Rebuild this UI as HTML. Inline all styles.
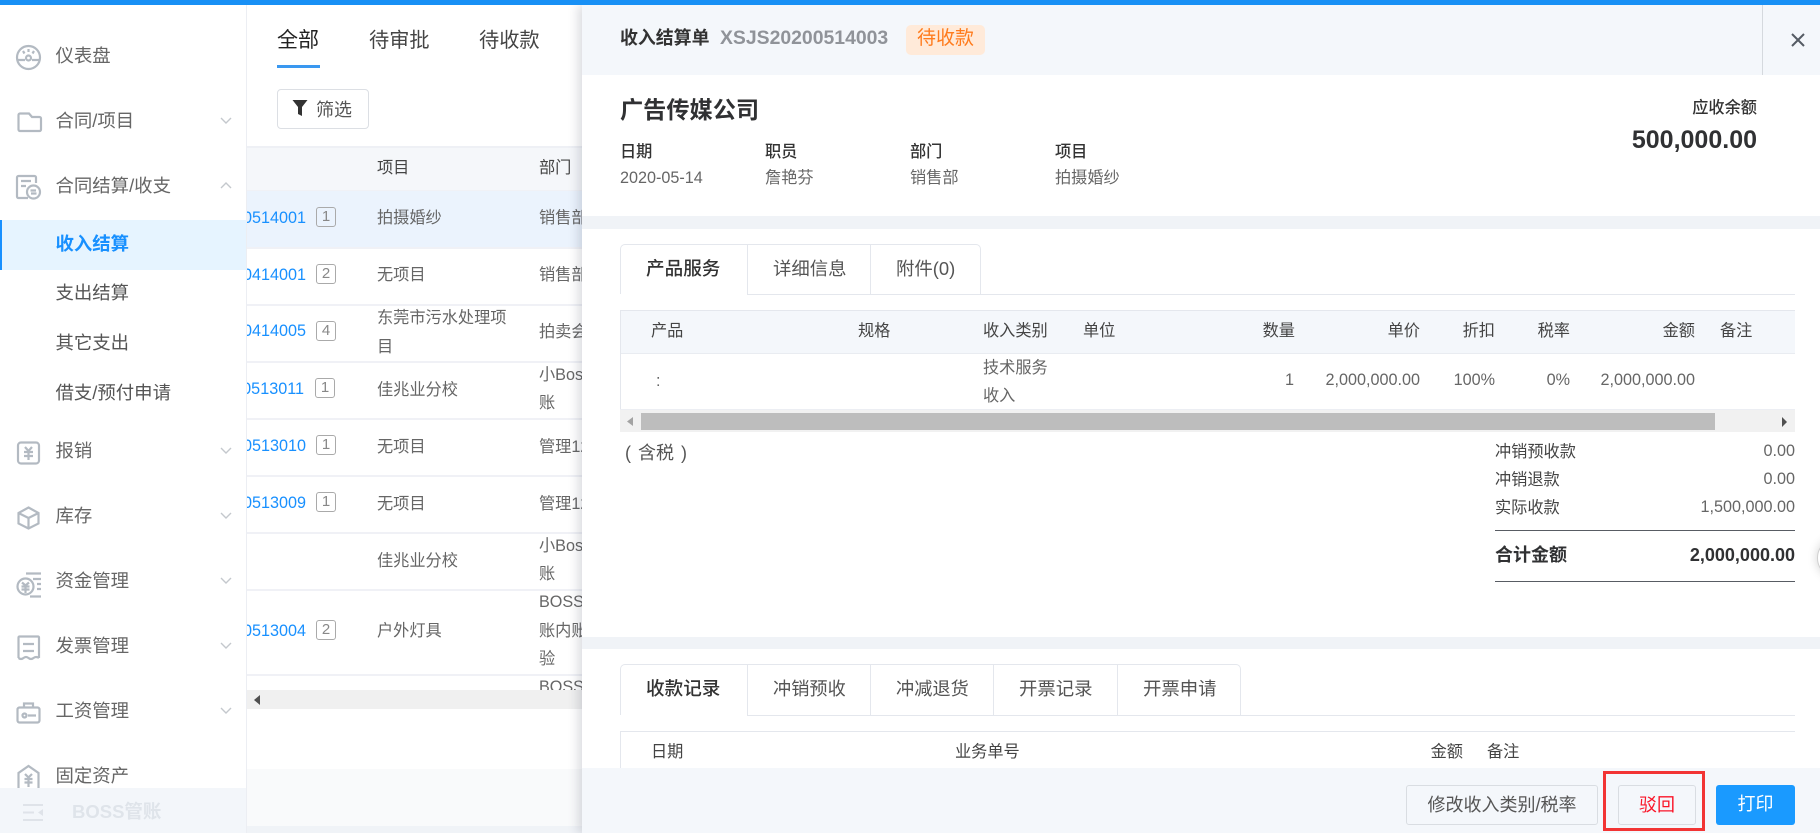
<!DOCTYPE html>
<html lang="zh"><head><meta charset="utf-8"><title>收入结算单</title>
<style>
html,body{margin:0;padding:0;background:#fff}
#r{position:relative;width:1820px;height:833px;overflow:hidden;background:#fff;font-family:"Liberation Sans","Noto Sans CJK SC",sans-serif;font-size:16.2px;color:#666}
#r div,#r span.t{position:absolute}
.t{position:absolute;white-space:nowrap;line-height:0}
.b{position:absolute}
.m{font-size:18.4px;color:#666}
.h{color:#444}
.n{color:#1890ff}
.g{width:18px;height:18px;border:1.5px solid #aaa;border-radius:3px;line-height:18px;text-align:center;color:#888;font-size:15px;box-sizing:content-box}
.l{height:2px;background:#f0f1f6;left:247px;width:335px}
.d{color:#333}
.dark{color:#333;font-weight:500}
svg{position:absolute;overflow:visible}
.ic{fill:none;stroke:#b3bac2;stroke-width:2.2}
.ch{fill:none;stroke:#c4c8cd;stroke-width:1.4}
</style></head><body><div id="r">

<!-- main list -->
<span class="t" style="left:277px;top:41px;font-size:21px;color:#222">全部</span>
<span class="t" style="left:369px;top:41px;font-size:20.2px;color:#444">待审批</span>
<span class="t" style="left:479px;top:41px;font-size:20.2px;color:#444">待收款</span>
<div style="left:277px;top:65px;width:43px;height:3px;background:#3a98f0"></div>
<div style="left:277px;top:89px;width:92px;height:40px;box-sizing:border-box;border:1px solid #dcdfe4;border-radius:4px"></div>
<svg style="left:292px;top:99px" width="16" height="18"><path d="M0.5 1H15.5L10 8V17L6 15V8Z" fill="#333"/></svg>
<span class="t" style="left:316px;top:110px;font-size:18px;color:#555">筛选</span>

<div style="left:247px;top:146px;width:335px;height:44px;background:#f5f7fa;border-top:2px solid #eef0f5;box-sizing:border-box"></div>
<div style="left:247px;top:190px;width:335px;height:57px;background:#ebf3fd"></div>
<div class="l" style="top:190px;height:1px"></div>
<div class="l" style="top:247px"></div><div class="l" style="top:304px"></div>
<div class="l" style="top:361px"></div><div class="l" style="top:418px"></div>
<div class="l" style="top:475px"></div><div class="l" style="top:532px"></div>
<div class="l" style="top:589px"></div><div class="l" style="top:674px"></div>

<span class="t h" style="left:377px;top:168px">项目</span>
<span class="t h" style="left:539px;top:168px">部门</span>

<span class="t n" style="right:1514px;top:218px">XSJS20200514001</span>
<div class="g" style="left:316px;top:207px">1</div>
<span class="t" style="left:377px;top:218px">拍摄婚纱</span><span class="t" style="left:539px;top:218px">销售部</span>

<span class="t n" style="right:1514px;top:275px">XSJS20200414001</span>
<div class="g" style="left:316px;top:264px">2</div>
<span class="t" style="left:377px;top:275px">无项目</span><span class="t" style="left:539px;top:275px">销售部</span>

<span class="t n" style="right:1514px;top:331px">XSJS20200414005</span>
<div class="g" style="left:316px;top:321px">4</div>
<span class="t" style="left:377px;top:318px">东莞市污水处理项</span><span class="t" style="left:377px;top:347px">目</span>
<span class="t" style="left:539px;top:332px">拍卖会</span>

<span class="t n" style="right:1516px;top:389px">XSJS20200513011</span>
<div class="g" style="left:315px;top:378px">1</div>
<span class="t" style="left:377px;top:390px">佳兆业分校</span>
<span class="t" style="left:539px;top:375px">小Boss</span><span class="t" style="left:539px;top:403px">账</span>

<span class="t n" style="right:1514px;top:446px">XSJS20200513010</span>
<div class="g" style="left:316px;top:435px">1</div>
<span class="t" style="left:377px;top:447px">无项目</span><span class="t" style="left:539px;top:447px">管理12</span>

<span class="t n" style="right:1514px;top:503px">XSJS20200513009</span>
<div class="g" style="left:316px;top:492px">1</div>
<span class="t" style="left:377px;top:504px">无项目</span><span class="t" style="left:539px;top:504px">管理12</span>

<span class="t" style="left:377px;top:561px">佳兆业分校</span>
<span class="t" style="left:539px;top:546px">小Boss</span><span class="t" style="left:539px;top:574px">账</span>

<span class="t n" style="right:1514px;top:631px">XSJS20200513004</span>
<div class="g" style="left:316px;top:620px">2</div>
<span class="t" style="left:377px;top:631px">户外灯具</span>
<span class="t" style="left:539px;top:602px">BOSS</span><span class="t" style="left:539px;top:631px">账内账</span><span class="t" style="left:539px;top:659px">验</span>
<span class="t" style="left:539px;top:687px">BOSS</span>

<div style="left:247px;top:690px;width:335px;height:143px;background:#fff"></div>
<div style="left:247px;top:690px;width:335px;height:19px;background:#f0f0f0"></div>
<svg style="left:254px;top:695px" width="8" height="10"><path d="M6 0V10L0 5Z" fill="#505050"/></svg>
<div style="left:247px;top:769px;width:335px;height:57px;background:#f9fafb"></div>
<div style="left:247px;top:826px;width:335px;height:7px;background:#f0f3f7"></div>

<!-- sidebar -->
<div style="left:0;top:5px;width:246px;height:828px;background:#fff;border-right:1px solid #eceef3"></div>
<div style="left:0;top:220px;width:246px;height:50px;background:#e6f4ff"></div>
<div style="left:0;top:220px;width:2px;height:50px;background:#1890ff"></div>

<span class="t m" style="left:55.5px;top:56px">仪表盘</span>
<span class="t m" style="left:55.5px;top:121px">合同/项目</span>
<span class="t m" style="left:55.5px;top:186px">合同结算/收支</span>
<span class="t m" style="left:55.5px;top:244px;color:#1890ff;font-weight:700">收入结算</span>
<span class="t m" style="left:55.5px;top:293px;color:#555">支出结算</span>
<span class="t m" style="left:55.5px;top:343px;color:#555">其它支出</span>
<span class="t m" style="left:55.5px;top:393px;color:#555">借支/预付申请</span>
<span class="t m" style="left:55.5px;top:451px">报销</span>
<span class="t m" style="left:55.5px;top:516px">库存</span>
<span class="t m" style="left:55.5px;top:581px">资金管理</span>
<span class="t m" style="left:55.5px;top:646px">发票管理</span>
<span class="t m" style="left:55.5px;top:711px">工资管理</span>
<span class="t m" style="left:55.5px;top:776px">固定资产</span>

<svg style="left:0;top:0" width="246" height="800">
<g class="ch">
<path d="M221 118l5 5 5-5M221 188l5-5 5 5M221 448l5 5 5-5M221 513l5 5 5-5M221 578l5 5 5-5M221 643l5 5 5-5M221 708l5 5 5-5"/>
</g>
<g class="ic">
<circle cx="28.500" cy="57.500" r="11.500"/>
<path d="M18 60H25M32 60H39" /><circle cx="28.500" cy="58" r="2.500"/>
<path d="M28.500 49v3M23 51l1.500 2.500M34 51l-1.500 2.500"/>
<path d="M18.500 115a1.500 1.500 0 0 1 1.500-1.500h9l3 3.500h7.500a1.500 1.500 0 0 1 1.500 1.500v11a1.500 1.500 0 0 1-1.500 1.500H20a1.500 1.500 0 0 1-1.500-1.500z"/>
<path d="M28 198H18.500a1.500 1.500 0 0 1-1.500-1.500V177.500a1.500 1.500 0 0 1 1.500-1.500H34.500a1.500 1.500 0 0 1 1.500 1.500V183"/>
<path d="M21 181H31M21 186H26"/><circle cx="33.500" cy="192" r="6.500"/><path d="M30.500 190.500H36M36.500 193.500H31"/>
<rect x="18" y="442.500" width="21" height="21" rx="3"/><path d="M25 447l3.500 4 3.500-4M24 452H33M24 456H33M28.500 451V460"/>
<path d="M28.500 507.500l10 5.500v10.500l-10 5-10-5V513zM18.500 513l10 5 10-5M28.500 518v11"/>
<circle cx="25.500" cy="586.500" r="8"/><path d="M22 582.500l3.500 3 3.500-3M21.500 586.500H29.500M21.500 589.500H29.500M25.500 586v7M26 573.500H41M33 579H41M37 584H41M37 589H41M30 596.500H41"/>
<path d="M18.500 658V637.500a1 1 0 0 1 1-1H38a1 1 0 0 1 1 1V658"/><path d="M18.500 658q2.500 2 5 0t5 0 5 0 5.500 0"/><path d="M23 644H34M23 651H34"/>
<rect x="17.500" y="707.500" width="22" height="15" rx="2"/><path d="M24 707.500V703.500H33V707.500M28 715.500H36"/><circle cx="24.500" cy="715.500" r="2"/>
<path d="M18.500 788V773l10-7 10 7v15"/><path d="M25 774l3.500 3.500 3.500-3.500M24.500 779H32.500M24.500 782.500H32.500M28.500 778V787"/>
</g>
</svg>

<div style="left:0;top:788px;width:246px;height:45px;background:#f3f6fa"></div>
<svg style="left:23px;top:804px" width="21" height="17"><path d="M0 1H20M0 8.500H11M0 16H20" stroke="#dfe3e9" stroke-width="2" fill="none"/><path d="M20 5V12L15 8.500Z" fill="#dfe3e9"/></svg>
<span class="t" style="left:72px;top:812px;font-size:18.500px;font-weight:700;color:#dfe4ea">BOSS管账</span>

<!-- panel -->
<div style="left:582px;top:5px;width:1238px;height:828px;background:#fff;box-shadow:-4px 0 10px rgba(30,40,60,.16)"></div>
<div style="left:582px;top:5px;width:1238px;height:70px;background:#f4f7fb"></div>
<div style="left:1762px;top:5px;width:1px;height:70px;background:#d5d9de"></div>
<svg style="left:1791px;top:33px" width="14" height="14"><path d="M1 1L13 13M13 1L1 13" stroke="#555b64" stroke-width="2" fill="none"/></svg>
<span class="t" style="left:620px;top:38px;font-size:17.900px;font-weight:700;color:#333">收入结算单</span>
<span class="t" style="left:720px;top:38px;font-size:19.400px;font-weight:700;color:#909399">XSJS20200514003</span>
<div style="left:906px;top:25px;width:79px;height:30px;background:#ffead9;border-radius:5px"></div>
<span class="t" style="left:917px;top:39px;font-size:19px;color:#ff7b1c">待收款</span>

<span class="t" style="left:620px;top:110px;font-size:23.200px;font-weight:700;color:#303133">广告传媒公司</span>
<span class="t dark" style="left:620px;top:152px">日期</span>
<span class="t dark" style="left:765px;top:152px">职员</span>
<span class="t dark" style="left:910px;top:152px">部门</span>
<span class="t dark" style="left:1055px;top:152px">项目</span>
<span class="t" style="left:620px;top:178px">2020-05-14</span>
<span class="t" style="left:765px;top:178px">詹艳芬</span>
<span class="t" style="left:910px;top:178px">销售部</span>
<span class="t" style="left:1055px;top:178px">拍摄婚纱</span>
<span class="t dark" style="right:63px;top:108px">应收余额</span>
<span class="t" style="right:63px;top:140px;font-size:25px;font-weight:700;color:#303133">500,000.00</span>
<div style="left:582px;top:216px;width:1238px;height:13px;background:#f0f3f7"></div>

<!-- tabs 1 -->
<div style="left:620px;top:294px;width:1175px;height:1px;background:#e4e7ed"></div>
<div style="left:620px;top:244px;width:361px;height:51px;box-sizing:border-box;border:1px solid #e4e7ed;border-bottom:0;border-radius:5px 5px 0 0"></div>
<div style="left:620px;top:294px;width:127px;height:1px;background:#fff"></div>
<div style="left:747px;top:244px;width:1px;height:51px;background:#e4e7ed"></div>
<div style="left:870px;top:244px;width:1px;height:51px;background:#e4e7ed"></div>
<span class="t" style="left:646px;top:269px;font-size:18.600px;font-weight:500;color:#333">产品服务</span>
<span class="t" style="left:773px;top:269px;font-size:18.400px;color:#555">详细信息</span>
<span class="t" style="left:896px;top:269px;font-size:18.400px;color:#555">附件(0)</span>

<!-- table 1 -->
<div style="left:620px;top:310px;width:1175px;height:44px;background:#f4f7fb;border-top:1px solid #e4e7ed;border-bottom:1px solid #e9ecf1;box-sizing:border-box"></div>
<div style="left:620px;top:310px;width:1px;height:100px;background:#e4e7ed"></div>
<div style="left:620px;top:409px;width:1175px;height:1px;background:#eceef3"></div>
<span class="t h" style="left:651px;top:331px">产品</span>
<span class="t h" style="left:858px;top:331px">规格</span>
<span class="t h" style="left:983px;top:331px">收入类别</span>
<span class="t h" style="left:1083px;top:331px">单位</span>
<span class="t h" style="right:525px;top:331px">数量</span>
<span class="t h" style="right:400px;top:331px">单价</span>
<span class="t h" style="right:325px;top:331px">折扣</span>
<span class="t h" style="right:250px;top:331px">税率</span>
<span class="t h" style="right:125px;top:331px">金额</span>
<span class="t h" style="left:1720px;top:331px">备注</span>
<span class="t" style="left:656px;top:381px">:</span>
<span class="t" style="left:983px;top:368px">技术服务</span>
<span class="t" style="left:983px;top:396px">收入</span>
<span class="t" style="right:526px;top:380px">1</span>
<span class="t" style="right:400px;top:380px">2,000,000.00</span>
<span class="t" style="right:325px;top:380px">100%</span>
<span class="t" style="right:250px;top:380px">0%</span>
<span class="t" style="right:125px;top:380px">2,000,000.00</span>
<div style="left:620px;top:410px;width:1175px;height:22px;background:#f1f1f1"></div>
<div style="left:641px;top:413px;width:1074px;height:17px;background:#bdbdbd"></div>
<svg style="left:627px;top:417px" width="7" height="9"><path d="M6 0V9L0 4.500Z" fill="#a3a3a3"/></svg>
<svg style="left:1781px;top:417px" width="7" height="10"><path d="M1 0V10L6 5Z" fill="#505050"/></svg>

<span class="t" style="left:625px;top:453px;font-size:18px;color:#555;word-spacing:2px">( 含税 )</span>
<span class="t h" style="left:1495px;top:452px">冲销预收款</span><span class="t" style="right:25px;top:451px">0.00</span>
<span class="t h" style="left:1495px;top:480px">冲销退款</span><span class="t" style="right:25px;top:479px">0.00</span>
<span class="t h" style="left:1495px;top:508px">实际收款</span><span class="t" style="right:25px;top:507px">1,500,000.00</span>
<div style="left:1495px;top:530px;width:300px;height:1px;background:#585c63"></div>
<span class="t" style="left:1495px;top:555px;font-size:18px;font-weight:700;color:#303133">合计金额</span>
<span class="t" style="right:25px;top:555px;font-size:18px;font-weight:700;color:#303133">2,000,000.00</span>
<div style="left:1495px;top:581px;width:300px;height:1px;background:#585c63"></div>

<div style="left:1817px;top:538px;width:40px;height:40px;box-sizing:border-box;border:1px solid #cfcfcf;border-radius:50%;background:#fff;box-shadow:0 0 10px rgba(0,0,0,.18)"></div>

<div style="left:582px;top:637px;width:1238px;height:12px;background:#f0f3f7"></div>

<!-- tabs 2 -->
<div style="left:620px;top:715px;width:1175px;height:1px;background:#e4e7ed"></div>
<div style="left:620px;top:664px;width:621px;height:52px;box-sizing:border-box;border:1px solid #e4e7ed;border-bottom:0;border-radius:5px 5px 0 0"></div>
<div style="left:620px;top:715px;width:127px;height:1px;background:#fff"></div>
<div style="left:747px;top:664px;width:1px;height:52px;background:#e4e7ed"></div>
<div style="left:870px;top:664px;width:1px;height:52px;background:#e4e7ed"></div>
<div style="left:993px;top:664px;width:1px;height:52px;background:#e4e7ed"></div>
<div style="left:1117px;top:664px;width:1px;height:52px;background:#e4e7ed"></div>
<span class="t" style="left:646px;top:689px;font-size:18.600px;font-weight:500;color:#333">收款记录</span>
<span class="t" style="left:773px;top:689px;font-size:18.200px;color:#555">冲销预收</span>
<span class="t" style="left:896px;top:689px;font-size:18.200px;color:#555">冲减退货</span>
<span class="t" style="left:1019px;top:689px;font-size:18.400px;color:#555">开票记录</span>
<span class="t" style="left:1143px;top:689px;font-size:18.400px;color:#555">开票申请</span>

<div style="left:620px;top:731px;width:1175px;height:1px;background:#e4e7ed"></div>
<div style="left:620px;top:731px;width:1px;height:37px;background:#e4e7ed"></div>
<span class="t h" style="left:651px;top:752px">日期</span>
<span class="t h" style="left:955px;top:752px">业务单号</span>
<span class="t h" style="right:357px;top:752px">金额</span>
<span class="t h" style="left:1487px;top:752px">备注</span>

<!-- footer -->
<div style="left:582px;top:768px;width:1238px;height:65px;background:#f4f7fb"></div>
<div style="left:1406px;top:785px;width:192px;height:40px;box-sizing:border-box;border:1px solid #d9dde2;border-radius:3px;text-align:center;line-height:38px;font-size:18px;color:#555">修改收入类别/税率</div>
<div style="left:1618px;top:785px;width:78px;height:40px;box-sizing:border-box;border:1px solid #d9dde2;border-radius:3px;text-align:center;line-height:38px;font-size:18px;color:#fa1528">驳回</div>
<div style="left:1716px;top:785px;width:79px;height:40px;background:#1a9aff;border-radius:3px;text-align:center;line-height:39px;font-size:18px;color:#fff">打印</div>
<div style="left:1603px;top:771px;width:102px;height:60px;box-sizing:border-box;border:3px solid #f23434"></div>

<div style="left:0;top:0;width:1820px;height:5px;background:#1890f5"></div>
</div></body></html>
